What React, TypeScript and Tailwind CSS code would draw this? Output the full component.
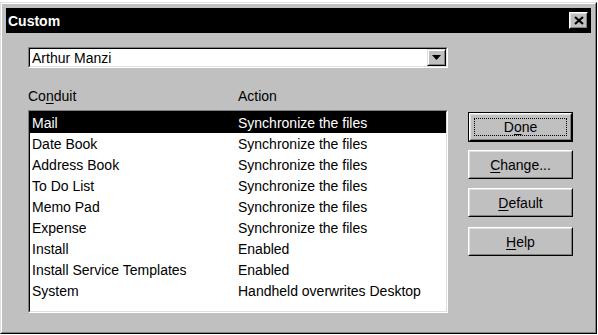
import React from "react";

const rows: [string, string][] = [
  ["Mail", "Synchronize the files"],
  ["Date Book", "Synchronize the files"],
  ["Address Book", "Synchronize the files"],
  ["To Do List", "Synchronize the files"],
  ["Memo Pad", "Synchronize the files"],
  ["Expense", "Synchronize the files"],
  ["Install", "Enabled"],
  ["Install Service Templates", "Enabled"],
  ["System", "Handheld overwrites Desktop"],
];

function Btn({ children, def }: { children: React.ReactNode; def?: boolean }) {
  const inner = (
    <div className="h-full w-full border-t border-l border-t-white border-l-white border-b border-r border-b-black border-r-black">
      <div className="h-full w-full border-t border-l border-t-[#dfdfdf] border-l-[#dfdfdf] border-b border-r border-b-[#808080] border-r-[#808080] flex items-center justify-center relative">
        {def && (
          <div className="absolute inset-[3px] border border-dotted border-black" />
        )}
        <span className="text-[14px] leading-[16px] text-black">{children}</span>
      </div>
    </div>
  );
  if (def) {
    return <div className="w-[105px] h-[30px] border border-black">{inner}</div>;
  }
  return <div className="w-[105px] h-[29px]">{inner}</div>;
}

export default function App() {
  return (
    <div
      className="w-[598px] h-[335px] bg-white pt-[2px] overflow-hidden"
      style={{ fontFamily: '"Liberation Sans", Arial, sans-serif' }}
    >
      <div className="w-[597px] h-[332px] border-t border-l border-t-[#dfdfdf] border-l-[#dfdfdf] border-b border-r border-b-black border-r-black">
        <div className="w-full h-full bg-[#c0c0c0] border-t border-l border-t-white border-l-white border-b border-r border-b-[#808080] border-r-[#808080] p-[4px] flex flex-col">
          {/* Title bar */}
          <div className="h-[25px] bg-black flex items-center justify-between pl-[2px] pr-[3px] shrink-0">
            <span className="text-white font-bold text-[14px] leading-[16px]">Custom</span>
            <div className="w-[19px] h-[17px] border-t border-l border-t-white border-l-white border-b border-r border-b-black border-r-black">
              <div className="w-full h-full bg-[#c0c0c0] border-t border-l border-t-[#dfdfdf] border-l-[#dfdfdf] border-b border-r border-b-[#808080] border-r-[#808080] flex items-center justify-center">
                <svg width="10" height="9" viewBox="0 0 10 9">
                  <path d="M1 1 L9 8 M9 1 L1 8" stroke="black" strokeWidth="2.2" />
                </svg>
              </div>
            </div>
          </div>
          {/* Body */}
          <div className="pl-[22px] pt-[14px] flex flex-col">
            {/* Combo box */}
            <div className="w-[420px] h-[21px] border-t border-l border-t-[#808080] border-l-[#808080] border-b border-r border-b-white border-r-white">
              <div className="w-full h-full bg-white border-t border-l border-t-black border-l-black border-b border-r border-b-[#dfdfdf] border-r-[#dfdfdf] flex items-center">
                <span className="flex-1 pl-[2px] text-[14px] leading-[16px] text-black">Arthur Manzi</span>
                <div className="w-[19px] h-[17px] border-t border-l border-t-[#dfdfdf] border-l-[#dfdfdf] border-b border-r border-b-black border-r-black">
                  <div className="w-full h-full bg-[#c0c0c0] border-t border-l border-t-white border-l-white border-b border-r border-b-[#808080] border-r-[#808080] flex items-center justify-center">
                    <svg width="9" height="5" viewBox="0 0 9 5">
                      <path d="M0 0 H9 L4.5 5 Z" fill="black" />
                    </svg>
                  </div>
                </div>
              </div>
            </div>
            <div className="flex mt-[20px]">
              <div className="flex flex-col w-[420px]">
                <div className="h-[16px] flex text-[14px] leading-[16px] text-black">
                  <span className="w-[210px]">
                    Co<span className="underline underline-offset-2">n</span>duit
                  </span>
                  <span>Action</span>
                </div>
                <div className="mt-[6px] h-[203px] border-t border-l border-t-[#808080] border-l-[#808080] border-b border-r border-b-white border-r-white">
                  <div className="w-full h-full bg-white border-t border-l border-t-black border-l-black border-b border-r border-b-[#dfdfdf] border-r-[#dfdfdf] flex flex-col">
                    {rows.map(([a, b], i) => (
                      <div
                        key={a}
                        className={
                          i === 0
                            ? "h-[21px] flex items-center pl-[2px] bg-black text-white text-[14px] leading-[16px]"
                            : "h-[21px] flex items-center pl-[2px] text-black text-[14px] leading-[16px]"
                        }
                      >
                        <span className="w-[206px] whitespace-nowrap">{a}</span>
                        <span className="whitespace-nowrap">{b}</span>
                      </div>
                    ))}
                  </div>
                </div>
              </div>
              <div className="flex flex-col ml-[20px] pt-[24px]">
                <Btn def>
                  D<span className="underline underline-offset-2">o</span>ne
                </Btn>
                <div className="mt-[8px]">
                  <Btn>
                    <span className="underline underline-offset-2">C</span>hange...
                  </Btn>
                </div>
                <div className="mt-[9px]">
                  <Btn>
                    <span className="underline underline-offset-2">D</span>efault
                  </Btn>
                </div>
                <div className="mt-[10px]">
                  <Btn>
                    <span className="underline underline-offset-2">H</span>elp
                  </Btn>
                </div>
              </div>
            </div>
          </div>
        </div>
      </div>
    </div>
  );
}
